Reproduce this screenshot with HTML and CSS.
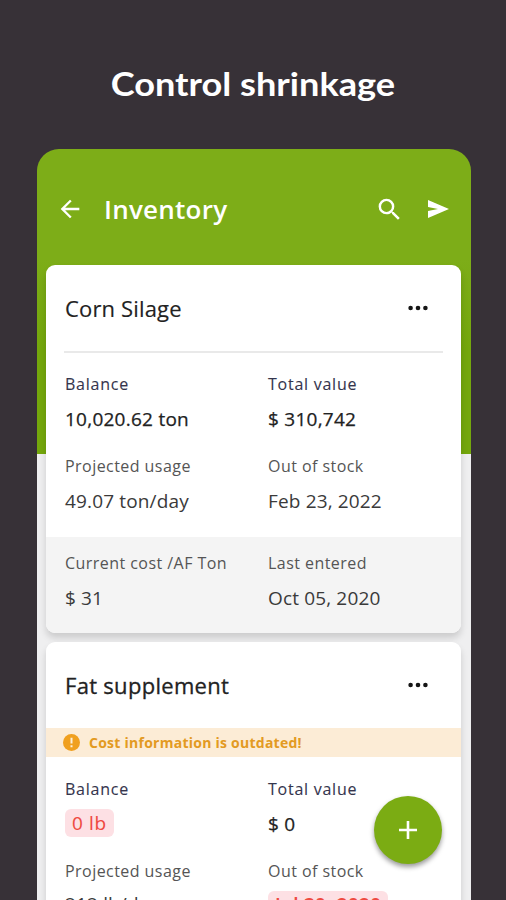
FILE: index.html
```html
<!DOCTYPE html>
<html lang="en">
<head>
	<meta charset="UTF-8">
	<meta name="viewport" content="width=device-width, initial-scale=1">

	<title>Inventory</title>

	<link rel="stylesheet" href="styles.css">
</head>
<body>

	<h1 class="headline"><span>Control shrinkage</span></h1>

	<div class="phone">
		<div class="app-bar">
			<svg class="back" width="28" height="28" viewBox="0 0 24 24"><path d="M20 11H7.83l5.59-5.59L12 4l-8 8 8 8 1.41-1.41L7.83 13H20v-2z"/></svg>
			<h2>Inventory</h2>
			<svg class="search" width="29" height="29" viewBox="0 0 24 24"><path d="M15.5 14h-.79l-.28-.27A6.47 6.47 0 0 0 16 9.5 6.5 6.5 0 1 0 9.5 16c1.61 0 3.09-.59 4.23-1.57l.27.28v.79l5 4.99L20.49 19l-4.99-5zm-6 0a4.5 4.5 0 1 1 0-9 4.5 4.5 0 0 1 0 9z"/></svg>
			<svg class="send" width="24" height="24" viewBox="0 0 24 24"><path d="M2 21l21-9L2 3v7l10 2-10 2v7z"/></svg>
		</div>

		<!-- Corn Silage -->
		<div class="card">
			<div class="card-header">
				<h3>Corn Silage</h3>
				<svg class="more" width="20" height="6" viewBox="0 0 20 6"><circle cx="2.6" cy="3" r="2.3"/><circle cx="10" cy="3" r="2.3"/><circle cx="17.4" cy="3" r="2.3"/></svg>
			</div>
			<div class="divider"></div>
			<div class="fields">
				<div class="field strong">
					<p class="label">Balance</p>
					<p class="value">10,020.62 ton</p>
				</div>
				<div class="field strong">
					<p class="label">Total value</p>
					<p class="value">$ 310,742</p>
				</div>
				<div class="field">
					<p class="label">Projected usage</p>
					<p class="value">49.07 ton/day</p>
				</div>
				<div class="field">
					<p class="label">Out of stock</p>
					<p class="value">Feb 23, 2022</p>
				</div>
			</div>
			<div class="fields footer">
				<div class="field">
					<p class="label">Current cost /AF Ton</p>
					<p class="value">$ 31</p>
				</div>
				<div class="field">
					<p class="label">Last entered</p>
					<p class="value">Oct 05, 2020</p>
				</div>
			</div>
		</div>

		<!-- Fat supplement -->
		<div class="card">
			<div class="card-header">
				<h3 class="medium">Fat supplement</h3>
				<svg class="more" width="20" height="6" viewBox="0 0 20 6"><circle cx="2.6" cy="3" r="2.3"/><circle cx="10" cy="3" r="2.3"/><circle cx="17.4" cy="3" r="2.3"/></svg>
			</div>
			<div class="warning">
				<svg width="17" height="17" viewBox="0 0 17 17"><circle cx="8.5" cy="8.5" r="8.5" fill="#f0a01f"/><path d="M7.5 3.8h2v5.6h-2zM7.5 11.2h2v2h-2z" fill="#fdeed8"/></svg>
				<span>Cost information is outdated!</span>
			</div>
			<div class="fields outdated">
				<div class="field strong">
					<p class="label">Balance</p>
					<p class="value flagged"><span class="chip">0 lb</span></p>
				</div>
				<div class="field strong">
					<p class="label">Total value</p>
					<p class="value">$ 0</p>
				</div>
				<div class="field">
					<p class="label">Projected usage</p>
					<p class="value usage">212 lb/day</p>
				</div>
				<div class="field">
					<p class="label">Out of stock</p>
					<p class="value flagged"><span class="chip date">Jul 30, 2020</span></p>
				</div>
			</div>
		</div>
	</div>

	<div class="fab">
		<svg width="18" height="18" viewBox="0 0 18 18"><path d="M7.7 0h2.6v7.7H18v2.6h-7.7V18H7.7v-7.7H0V7.7h7.7z"/></svg>
	</div>

</body>
</html>
```
FILE: styles.css
```css
body {
	margin: 0;
	height: 900px;
	overflow: hidden;
	position: relative;
	background-color: #373137;
	font-family: 'Open Sans', sans-serif;
	color: #222;
}
h1,h2,h3,p {
	margin: 0;
}
svg {
	display: block;
	flex: none;
}
.headline {
	height: 149px;
	padding-top: 64px;
	box-sizing: border-box;
	font-family: 'Lato', sans-serif;
	font-size: 32px;
	line-height: 40px;
	font-weight: 700;
	text-align: center;
	white-space: nowrap;
	color: #fff;
}
.headline span {
	display: inline-block;
	transform: scaleX(1.13);
}

/* Phone */
.phone {
	width: 434px;
	height: 751px;
	margin-left: 37px;
	padding: 0 9px;
	box-sizing: border-box;
	border-radius: 22px 22px 0 0;
	overflow: hidden;
	background: linear-gradient(#7dad18 0, #7dad18 110px, #74a70c 200px, #74a70c 305px, #efeff0 305px);
}
.app-bar {
	display: flex;
	align-items: center;
	height: 116px;
	padding: 4px 12px 0 10px;
	box-sizing: border-box;
	fill: #fff;
}
.app-bar h2 {
	flex: 1;
	margin-left: 20px;
	font-size: 26px;
	line-height: 36px;
	font-weight: 600;
	letter-spacing: 0.25px;
	color: #fff;
}
.send {
	margin-left: 22px;
}

/* Cards */
.card {
	width: 415px;
	margin-bottom: 9px;
	border-radius: 9px;
	overflow: hidden;
	background-color: #fff;
	box-shadow: 0 5px 7px rgba(0,0,0,0.15);
}
.card-header {
	display: flex;
	align-items: center;
	justify-content: space-between;
	height: 86px;
	padding: 0 33px 0 19px;
}
.card-header h3 {
	font-size: 22px;
	line-height: 30px;
	font-weight: 400;
	letter-spacing: 0.15px;
	-webkit-text-stroke: 0.15px #222;
}
.card-header .medium {
	letter-spacing: 0.3px;
	-webkit-text-stroke: 0.3px #222;
}
.more {
	fill: #151515;
}
.divider {
	height: 2px;
	margin: 0 18px;
	background-color: #e9e9e9;
}
.fields {
	display: grid;
	grid-template-columns: 203px 1fr;
	row-gap: 21px;
	padding: 19px 0 22px 19px;
}
.label {
	font-size: 16px;
	line-height: 24px;
	letter-spacing: 0.45px;
	color: #555;
	white-space: nowrap;
}
.value {
	margin-top: 9px;
	font-size: 19px;
	line-height: 28px;
	letter-spacing: 0.15px;
	color: #3a3a3a;
	white-space: nowrap;
}
.strong .label {
	letter-spacing: 0.75px;
	color: #35354d;
	-webkit-text-stroke: 0.1px;
}
.strong .value {
	letter-spacing: 0.25px;
	color: #222;
	-webkit-text-stroke: 0.25px;
}
.footer {
	padding: 14px 0 21px 19px;
	background-color: #f4f4f4;
}

/* Outdated cost */
.warning {
	display: flex;
	align-items: center;
	gap: 9px;
	height: 29px;
	padding-left: 17px;
	background-color: #fcecd6;
	font-size: 14px;
	font-weight: 700;
	letter-spacing: 0.25px;
	color: #e39a22;
}
.outdated {
	padding-top: 20px;
}
.field .flagged {
	margin-top: 8px;
}
.field .usage {
	margin-top: 7px;
}
.chip {
	display: inline-block;
	padding: 0 7px;
	border-radius: 6px;
	letter-spacing: 0.6px;
	background-color: #fde0e4;
	color: #ef4a41;
	-webkit-text-stroke: 0.1px;
}
.date {
	margin-top: -1px;
	letter-spacing: 0.25px;
	font-weight: 600;
}

/* Add button */
.fab {
	position: absolute;
	left: 374px;
	top: 796px;
	width: 68px;
	height: 68px;
	display: flex;
	align-items: center;
	justify-content: center;
	border-radius: 50%;
	background-color: #7bac13;
	box-shadow: 0 3px 5px rgba(0,0,0,0.4);
	fill: #fff;
}
```
